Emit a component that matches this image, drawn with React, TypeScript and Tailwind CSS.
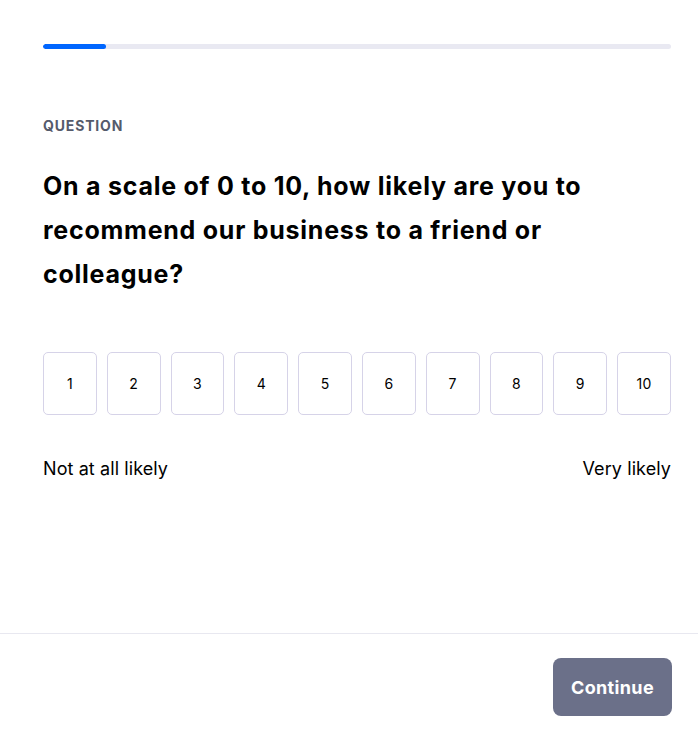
import React from "react";

export default function App() {
  const nums = [1, 2, 3, 4, 5, 6, 7, 8, 9, 10];
  return (
    <div
      className="w-[698px] h-[734px] bg-white flex flex-col text-black"
      style={{ fontFamily: "Inter, 'Noto Sans', sans-serif" }}
    >
      <div className="flex-1 pl-[43px] pr-[27px] pt-[44px]">
        <div className="h-[5px] rounded-full bg-[#e9e9f2] overflow-hidden">
          <div className="h-full w-[63px] rounded-full bg-[#0066ff]" />
        </div>
        <div className="mt-[68px] text-[14px] leading-[17px] font-bold tracking-[0.06em] text-[#555a6b]">
          QUESTION
        </div>
        <h1 className="mt-[30px] text-[25px] leading-[44px] font-bold tracking-[0.03em] w-[600px]">
          On a scale of 0 to 10, how likely are you to recommend our business to a friend or colleague?
        </h1>
        <div className="mt-[56px] flex gap-[10px]">
          {nums.map((n) => (
            <div
              key={n}
              className="flex-1 h-[63px] rounded-[5px] border border-[#d6d3e8] flex items-center justify-center text-[14px] tracking-[0.02em]"
            >
              {n}
            </div>
          ))}
        </div>
        <div className="mt-[43px] flex justify-between text-[18px] leading-[22px] tracking-[0.005em]">
          <span>Not at all likely</span>
          <span>Very likely</span>
        </div>
      </div>
      <div className="border-t border-[#e8e8f0] h-[101px] flex items-start justify-end pr-[26px] pt-[24px]">
        <button className="w-[119px] h-[58px] rounded-[8px] bg-[#6b7089] text-white font-bold text-[18px] tracking-[0.02em]">
          Continue
        </button>
      </div>
    </div>
  );
}
